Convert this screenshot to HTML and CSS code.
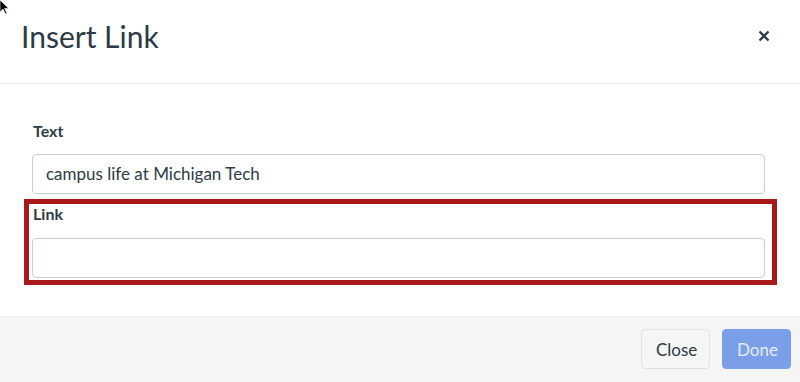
FILE: index.html
```html
<!DOCTYPE html>
<html lang="en">
<head>
<meta charset="utf-8">
<title>Insert Link</title>
<link rel="stylesheet" href="styles.css">
</head>
<body>
<div class="dialog">
  <header class="dialog-header">
    <h1 class="dialog-title">Insert Link</h1>
    <button class="close-x" aria-label="Close">
      <svg width="12" height="12" viewBox="0 0 12 12"><path d="M1.5 1.5 L10.5 10.5 M10.5 1.5 L1.5 10.5" stroke="#2d3b45" stroke-width="2.3" stroke-linecap="butt"/></svg>
    </button>
  </header>
  <main class="dialog-body">
    <label class="field-label">Text</label>
    <div class="text-input">campus life at Michigan Tech</div>
    <div class="highlight">
      <label class="field-label">Link</label>
      <div class="text-input"></div>
    </div>
  </main>
  <footer class="dialog-footer">
    <button class="btn btn-close">Close</button>
    <button class="btn btn-done">Done</button>
  </footer>
</div>
<svg class="cursor" width="10" height="16" viewBox="0 0 10 16"><path d="M0 0 L0 12 L3 9 L5.5 14 L7 13.3 L4.6 8.4 L8.6 8.4 Z" fill="#000" stroke="#fff" stroke-width="0.6"/></svg>
</body>
</html>
```
FILE: styles.css
```css
* { box-sizing: border-box; }
html, body { margin: 0; padding: 0; }
body {
  width: 800px;
  height: 382px;
  overflow: hidden;
  background: #fff;
  font-family: Lato, "Noto Sans", sans-serif;
  color: #2d3b45;
  position: relative;
}
.dialog { display: flex; flex-direction: column; height: 382px; }
.dialog-header {
  height: 84px;
  border-bottom: 1px solid #e6e7e9;
  display: flex;
  align-items: flex-start;
  justify-content: space-between;
  padding: 18px 30px 0 21px;
}
.dialog-title {
  margin: 0;
  font-size: 30px;
  line-height: 36px;
  font-weight: 400;
  color: #2d3b45;
}
.close-x {
  border: 0;
  background: transparent;
  padding: 0;
  margin-top: 12px;
  width: 12px;
  height: 12px;
  display: flex;
}
.dialog-body {
  flex: 1;
  padding: 37px 35px 0 32px;
  display: flex;
  flex-direction: column;
}
.field-label {
  display: block;
  font-size: 16px;
  line-height: 20px;
  font-weight: 700;
  margin-bottom: 13px;
  margin-left: 1px;
}
.text-input {
  height: 40px;
  border: 1px solid #c7cdd1;
  border-radius: 4px;
  padding: 0 13px;
  font-size: 17px;
  line-height: 38px;
  color: #2d3b45;
  background: #fff;
}
.highlight {
  margin: 5px -12px 0 -8px;
  border: 5px solid #a8191b;
  padding: 0 7px 2px 3px;
}
.highlight .field-label { margin-bottom: 14px; }
.dialog-footer {
  height: 66px;
  background: #f5f5f5;
  border-top: 1px solid #ededed;
  display: flex;
  justify-content: flex-end;
  align-items: flex-start;
  gap: 12px;
  padding: 12px 9px 0 0;
}
.btn {
  height: 40px;
  border-radius: 4px;
  font-family: Lato, "Noto Sans", sans-serif;
  font-size: 17px;
  padding: 0 14px;
  cursor: pointer;
}
.btn-close {
  width: 69px;
  background: #f5f5f5;
  border: 1px solid #dfe1e3;
  color: #2d3b45;
}
.btn-done {
  width: 69px;
  background: #7a9fe8;
  border: 1px solid #7a9fe8;
  color: #e4ebfb;
}
.cursor { position: absolute; left: 0; top: 0; }
```
